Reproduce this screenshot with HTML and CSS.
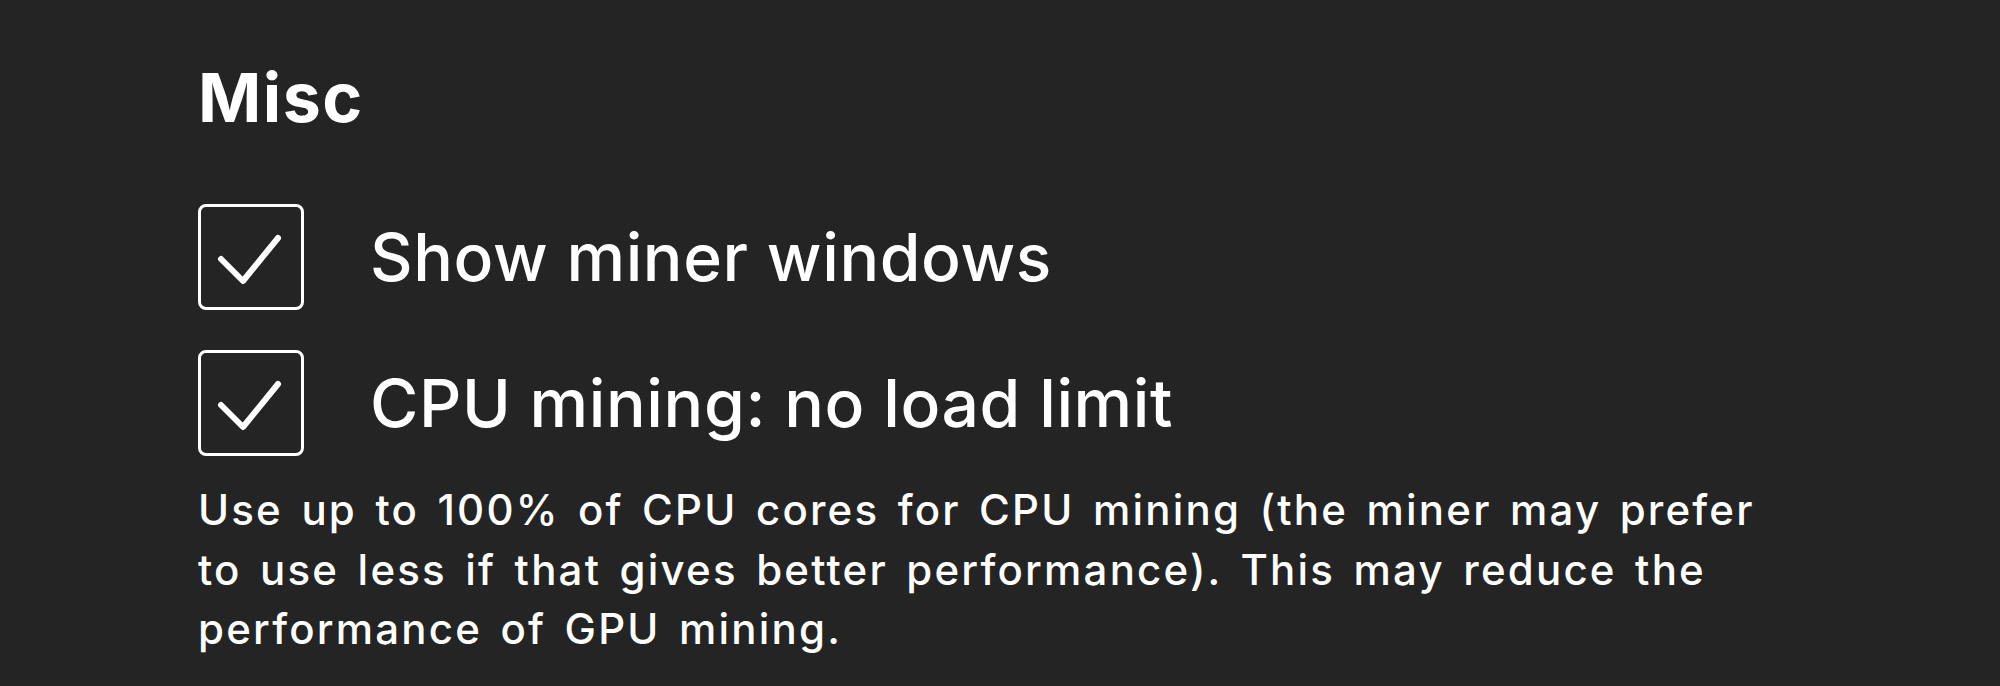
FILE: index.html
```html
<!DOCTYPE html>
<html lang="en">
<head>
    <meta charset="UTF-8">
    <title>Settings - Misc</title>
    <link rel="stylesheet" href="styles.css">
</head>
<body>
    <div class="settings">
        <h2 class="section-title">Misc</h2>

        <label class="check-row">
            <input type="checkbox" checked>
            <span class="check-box">
                <svg viewBox="0 0 106 106" width="106" height="106"><path d="M23 55 L45 77 L80 34" /></svg>
            </span>
            <span class="check-label">Show miner windows</span>
        </label>

        <label class="check-row">
            <input type="checkbox" checked>
            <span class="check-box">
                <svg viewBox="0 0 106 106" width="106" height="106"><path d="M23 55 L45 77 L80 34" /></svg>
            </span>
            <span class="check-label">CPU mining: no load limit</span>
        </label>

        <p class="hint">Use up to 100% of CPU cores for CPU mining (the miner may prefer<br>to use less if that gives better performance). This may reduce the<br>performance of GPU mining.</p>
    </div>
</body>
</html>
```

FILE: styles.css
```css
html, body {
    margin: 0;
    padding: 0;
    background: #242424;
}
body {
    font-family: Inter, "Open Sans", sans-serif;
    color: #fff;
    height: 686px;
    overflow: hidden;
}
.settings {
    padding: 52px 0 0 198px;
}
.section-title {
    margin: 0 0 62px 0;
    font-size: 68px;
    font-weight: 700;
    line-height: 90px;
    letter-spacing: 1.5px;
}
.check-row {
    display: flex;
    align-items: center;
    gap: 66px;
    margin-bottom: 40px;
    cursor: pointer;
}
.check-row input {
    display: none;
}
.check-box {
    width: 100px;
    height: 100px;
    border: 3px solid #fff;
    border-radius: 8px;
    display: flex;
}
.check-box svg {
    margin: -3px;
}
.check-box path {
    fill: none;
    stroke: #fff;
    stroke-width: 6;
    stroke-linecap: round;
    stroke-linejoin: round;
}
.check-label {
    font-size: 66px;
    font-weight: 500;
    letter-spacing: 0.6px;
}
.hint {
    margin: -16px 0 0 0;
    font-size: 42px;
    font-weight: 500;
    line-height: 59.5px;
    letter-spacing: 2.2px;
    word-spacing: 5px;
    white-space: nowrap;
}
```
